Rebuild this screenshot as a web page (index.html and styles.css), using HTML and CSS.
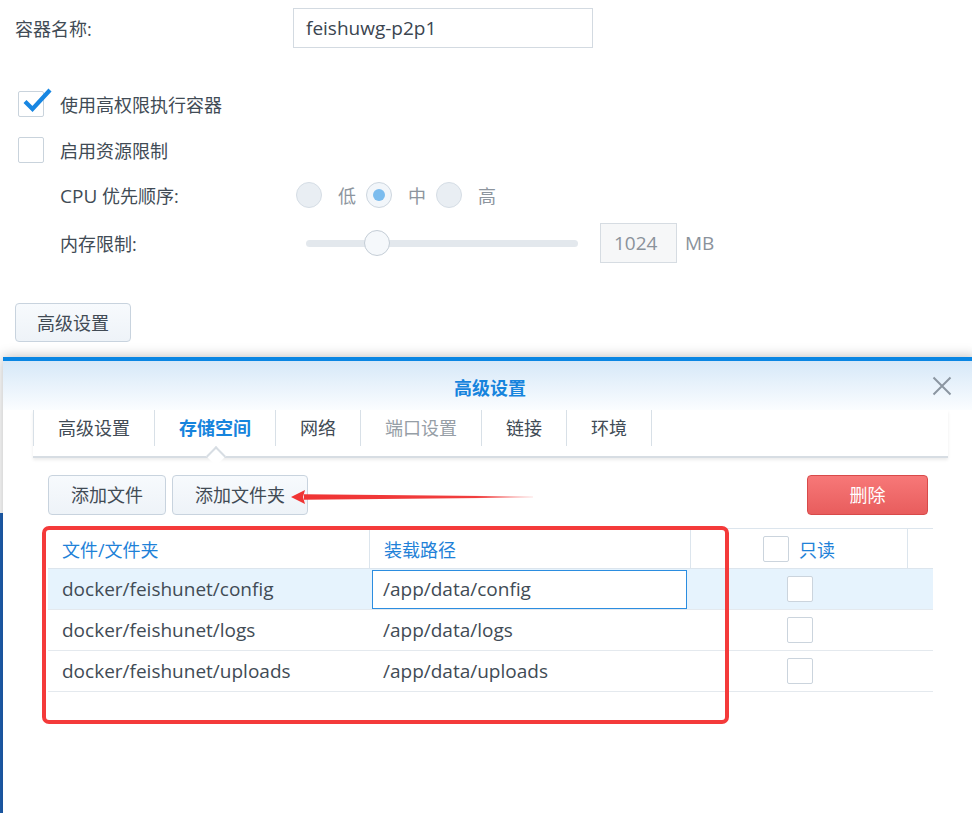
FILE: index.html
```html
<!DOCTYPE html>
<html lang="zh-CN">
<head>
<meta charset="utf-8">
<title>容器设置</title>
<link rel="stylesheet" href="styles.css">
</head>
<body>
<div class="page">
  <div class="name-row">
    <span class="lbl">容器名称:</span>
    <div class="text-input">feishuwg-p2p1</div>
  </div>

  <div class="check-row first">
    <span class="cb">
      <svg class="tick" width="32" height="30" viewBox="0 0 32 30"><path d="M4 15.5 L11.5 23 L29 4" fill="none" stroke="#1786e2" stroke-width="4.2" stroke-linecap="butt" stroke-linejoin="miter"/></svg>
    </span>
    <span class="ctext">使用高权限执行容器</span>
  </div>
  <div class="check-row second">
    <span class="cb"></span>
    <span class="ctext">启用资源限制</span>
  </div>

  <div class="sub-row cpu">
    <span class="sub-lbl"><span class="lat">CPU</span> 优先顺序:</span>
    <div class="radios">
      <span class="radio"></span><span class="rlbl">低</span>
      <span class="radio on"></span><span class="rlbl">中</span>
      <span class="radio"></span><span class="rlbl">高</span>
    </div>
  </div>

  <div class="sub-row mem">
    <span class="sub-lbl">内存限制:</span>
    <div class="slider"><span class="track"></span><span class="thumb"></span></div>
    <div class="num-input">1024</div>
    <span class="unit">MB</span>
  </div>

  <button class="btn adv-btn">高级设置</button>
</div>

<div class="side-strip"></div>

<div class="dialog">
  <div class="dlg-head">
    <span class="dlg-title">高级设置</span>
    <svg class="dlg-close" width="20" height="20" viewBox="0 0 20 20"><path d="M1.5 1.5 L18.5 18.5 M18.5 1.5 L1.5 18.5" stroke="#8b96a1" stroke-width="2"/></svg>
  </div>

  <div class="tabs">
    <div class="tab">高级设置</div>
    <div class="tab active">存储空间</div>
    <div class="tab">网络</div>
    <div class="tab disabled">端口设置</div>
    <div class="tab">链接</div>
    <div class="tab">环境</div>
  </div>

  <div class="toolbar">
    <button class="btn">添加文件</button>
    <button class="btn">添加文件夹</button>
    <span class="spacer"></span>
    <button class="btn danger">删除</button>
  </div>

  <div class="grid">
    <div class="grid-head">
      <div class="hc">文件/文件夹</div>
      <div class="hc">装载路径</div>
      <div class="hc center"><span class="cb small"></span><span class="hlabel">只读</span></div>
      <div class="hc last"></div>
    </div>
    <div class="grid-row selected">
      <div class="c">docker/feishunet/config</div>
      <div class="c edit"><div class="cell-input">/app/data/config</div></div>
      <div class="c center"><span class="cb small"></span></div>
      <div class="c"></div>
    </div>
    <div class="grid-row">
      <div class="c">docker/feishunet/logs</div>
      <div class="c">/app/data/logs</div>
      <div class="c center"><span class="cb small"></span></div>
      <div class="c"></div>
    </div>
    <div class="grid-row">
      <div class="c">docker/feishunet/uploads</div>
      <div class="c">/app/data/uploads</div>
      <div class="c center"><span class="cb small"></span></div>
      <div class="c"></div>
    </div>
  </div>

  <!-- red callouts drawn over the storage panel -->
  <svg class="callout-arrow" width="250" height="16" viewBox="0 0 250 16">
    <defs>
      <linearGradient id="shaft" x1="0" y1="0" x2="1" y2="0">
        <stop offset="0" stop-color="#f03434" stop-opacity="1"/>
        <stop offset="0.75" stop-color="#f03434" stop-opacity="0.95"/>
        <stop offset="1" stop-color="#f03434" stop-opacity="0.15"/>
      </linearGradient>
    </defs>
    <polygon points="14,5.2 243,7.4 243,8.6 14,10.8" fill="url(#shaft)"/>
    <polygon points="1,8 15,1 13,8 15,15" fill="#f03434"/>
  </svg>
  <div class="callout-box"></div>
</div>
</body>
</html>
```
FILE: styles.css
```css
* { box-sizing: border-box; }

html, body {
  margin: 0;
  padding: 0;
  background: #ffffff;
}

body {
  width: 972px;
  height: 813px;
  overflow: hidden;
  position: relative;
  font-family: "Open Sans", "Noto Sans CJK SC", sans-serif;
  font-size: 18px;
  color: #414b55;
}

/* Latin-only strings run a touch larger than the CJK labels */
.lat { font-size: 19px; }

/* ---------- container settings form ---------- */
.page {
  padding: 8px 0 0 15px;
  display: flex;
  flex-direction: column;
  align-items: flex-start;
}

.name-row {
  display: flex;
  align-items: center;
  height: 40px;
}

.lbl {
  width: 278px;
}

.text-input {
  width: 300px;
  height: 40px;
  border: 1px solid #d3dae1;
  padding: 0 12px;
  line-height: 38px;
  font-size: 19px;
  color: #3b4550;
}

.check-row {
  display: flex;
  align-items: center;
  height: 26px;
  margin-left: 3px;
}
.check-row.first { margin-top: 43px; }
.check-row.second { margin-top: 20px; }

.cb {
  position: relative;
  display: inline-block;
  width: 26px;
  height: 26px;
  border: 1px solid #c9d3dc;
  border-radius: 2px;
  background: #fff;
  flex: none;
}
.cb .tick {
  position: absolute;
  left: 2px;
  top: -6px;
}
.ctext { margin-left: 16px; }

.sub-row {
  display: flex;
  align-items: center;
  padding-left: 45px;
}
.sub-row.cpu { margin-top: 19px; height: 26px; }
.sub-row.mem { margin-top: 15px; height: 40px; }

.sub-lbl { width: 236px; }

.radios {
  display: flex;
  align-items: center;
}
.radio {
  width: 26px;
  height: 26px;
  border-radius: 50%;
  background: #e9eef3;
  border: 1px solid #d5dde5;
  position: relative;
}
.radio.on {
  background: #f2f6fa;
  border-color: #cdd6df;
}
.radio.on::after {
  content: "";
  position: absolute;
  left: 6px;
  top: 6px;
  width: 12px;
  height: 12px;
  border-radius: 50%;
  background: #7bbcee;
}
.rlbl {
  color: #8d959e;
  margin: 0 10px 0 16px;
}

.slider {
  position: relative;
  width: 272px;
  height: 26px;
  margin-left: 10px;
  display: flex;
  align-items: center;
}
.slider .track {
  width: 100%;
  height: 7px;
  border-radius: 4px;
  background: #e3e8ed;
}
.slider .thumb {
  position: absolute;
  left: 58px;
  top: 0;
  width: 26px;
  height: 26px;
  border-radius: 50%;
  background: #f5f8fb;
  border: 1px solid #c4cdd6;
}

.num-input {
  margin-left: 22px;
  width: 77px;
  height: 40px;
  border: 1px solid #d6dce2;
  background: #f6f7f8;
  color: #8a929b;
  line-height: 38px;
  padding-left: 13px;
  font-size: 19px;
}
.unit {
  margin-left: 8px;
  color: #8a929b;
  font-size: 19px;
}

.btn {
  font-family: inherit;
  font-size: 18px;
  color: #414b55;
  height: 40px;
  padding: 0 22px;
  border: 1px solid #c8d3de;
  border-radius: 4px;
  background: linear-gradient(#f7fafd, #eef3f8);
  line-height: 38px;
}
.adv-btn {
  margin-top: 40px;
  height: 39px;
  width: 116px;
  padding: 0;
}

/* blue edge of the window behind the dialog */
.side-strip {
  position: absolute;
  left: 0;
  top: 513px;
  width: 3px;
  height: 300px;
  background: #1e60b3;
}

/* ---------- advanced settings dialog ---------- */
.dialog {
  position: absolute;
  left: 3px;
  top: 357px;
  width: 974px;
  height: 470px;
  background: #fff;
  border-top: 4px solid #0986e3;
  box-shadow: 0 0 12px rgba(0, 0, 0, 0.28);
}

.dlg-head {
  position: relative;
  height: 49px;
  background: linear-gradient(#d6e8f8, #fbfdff);
  display: flex;
  justify-content: center;
  align-items: center;
}
.dlg-title {
  font-weight: bold;
  color: #1684dd;
  padding-top: 2px;
}
.dlg-close {
  position: absolute;
  right: 25px;
  top: 15px;
}

.tabs {
  display: flex;
  margin: 0 29px 0 30px;
  padding-bottom: 10px;
  border-bottom: 2px solid #d7dde3;
  box-shadow: 0 2px 3px rgba(0, 0, 0, 0.08);
}
.tab {
  position: relative;
  height: 36px;
  line-height: 36px;
  padding: 0 24px;
  border-right: 1px solid #d8e0e7;
}
.tab:first-child { border-left: 1px solid #d8e0e7; }
.tab.active {
  color: #1684dd;
  font-weight: bold;
}
.tab.active::after {
  content: "";
  position: absolute;
  left: 50%;
  bottom: -17px;
  width: 12px;
  height: 12px;
  margin-left: -6px;
  background: #fff;
  border-top: 2px solid #d7dde3;
  border-left: 2px solid #d7dde3;
  transform: rotate(45deg);
}
.tab.disabled { color: #969ea6; }

.toolbar {
  display: flex;
  margin: 17px 49px 0 45px;
  gap: 6px;
}
.spacer { flex: 1; }
.btn.danger {
  width: 121px;
  padding: 0;
  color: #fff;
  border-color: #d84a4a;
  background: linear-gradient(#f77878, #e85d5d);
}

.grid {
  margin: 13px 44px 0 45px;
}
.grid-head,
.grid-row {
  display: grid;
  grid-template-columns: 322px 321px 217px 1fr;
}
.grid-head {
  border-top: 1px solid #dce5ed;
  border-bottom: 1px solid #dce5ed;
  height: 41px;
}
.hc {
  display: flex;
  align-items: center;
  padding-left: 14px;
  color: #1f82d8;
  border-right: 1px solid #dce5ed;
}
.hc.last { border-right: none; }
.hc.center,
.c.center {
  justify-content: center;
  padding-left: 0;
}
.hlabel { margin-left: 10px; }

.grid-row {
  height: 41px;
  border-bottom: 1px solid #e4e9ee;
  font-size: 19px;
}
.grid-row.selected { background: #e6f3fd; }
.c {
  display: flex;
  align-items: center;
  padding-left: 14px;
}
.c:nth-child(2) { padding-left: 13px; }
.c.edit { padding-left: 2px; }
.cell-input {
  width: 315px;
  height: 39px;
  border: 1px solid #2b8de0;
  background: #fff;
  padding-left: 10px;
  line-height: 37px;
}
.cb.small { border-color: #cbd4dd; }

.callout-arrow {
  position: absolute;
  left: 287px;
  top: 128px;
}
.callout-box {
  position: absolute;
  left: 39px;
  top: 165px;
  width: 687px;
  height: 198px;
  border: 4px solid #f43a3a;
  border-radius: 7px;
}
```
